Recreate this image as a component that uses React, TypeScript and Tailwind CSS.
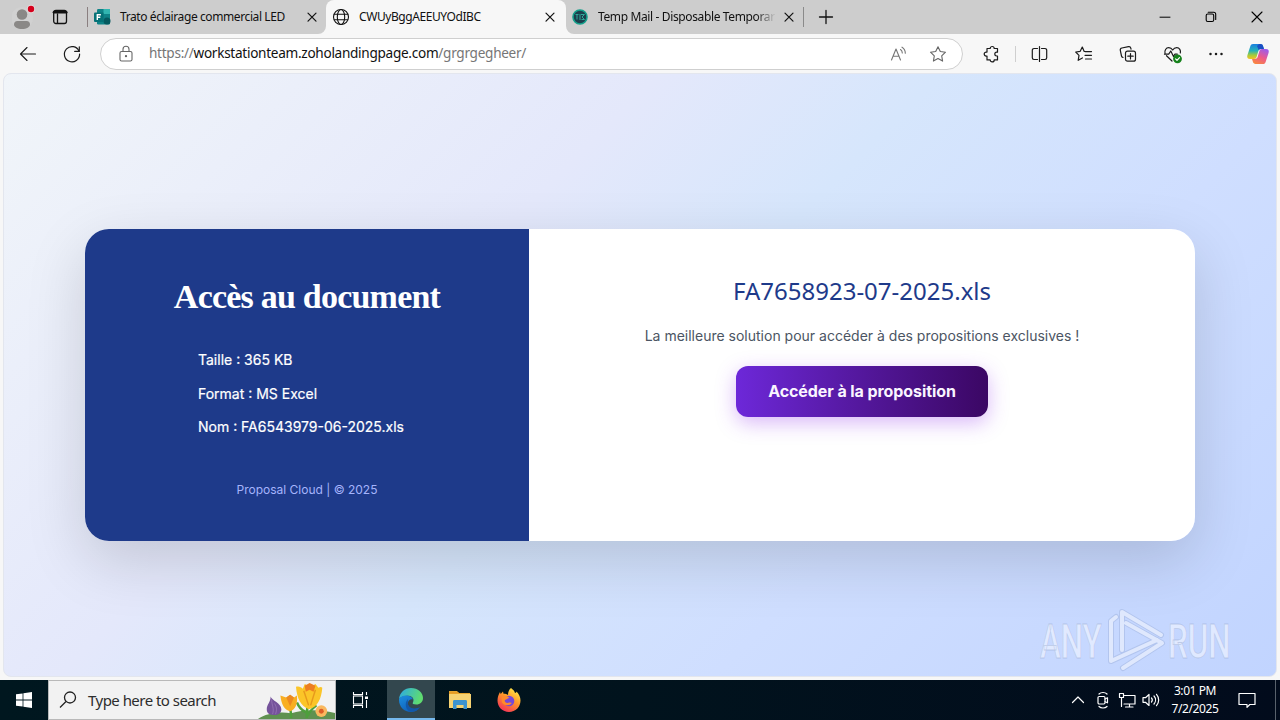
import { ReactNode } from 'react';

type IconProps = { children: ReactNode; size?: number; className?: string; w?: number };

// Thin outline icon on a 20 unit grid
function Icon({ children, size = 20, className = '', w = 1.1 }: IconProps) {
  return (
    <svg width={size} height={size} viewBox="0 0 20 20" fill="none" stroke="currentColor" strokeWidth={w} strokeLinecap="round" strokeLinejoin="round" className={`shrink-0 ${className}`}>
      {children}
    </svg>
  );
}

function CloseIcon() {
  return (
    <Icon w={1.2}>
      <path d="M6 6.200l8 8M14 6.200l-8 8" />
    </Icon>
  );
}

function TabStrip() {
  return (
    <div className="flex h-[34px] bg-[#cdcdcd] text-[#111] text-[12px]">
      <div className="flex w-[88px] items-center pl-[12px]">
        <svg width="24" height="26" viewBox="0 0 24 26" className="shrink-0">
          <circle cx="10" cy="14" r="11" fill="#dcdcdc" opacity=".3" />
          <circle cx="10" cy="10.500" r="5.300" fill="#8a8886" />
          <path d="M2 20.500c0-2.200 1.300-3.500 3.500-3.500h9c2.200 0 3.500 1.300 3.500 3.500 0 2.500-3.500 4.500-8 4.500s-8-2-8-4.500z" fill="#8a8886" />
          <circle cx="19" cy="5" r="4.200" fill="#e4dada" />
          <circle cx="19" cy="5" r="3.200" fill="#d5001c" />
        </svg>
        <Icon className="ml-[14px]" w={1.3}>
          <rect x="3.700" y="3.500" width="12.800" height="13" rx="2.200" />
          <path d="M4 5.200h12.200" strokeWidth="2.600" />
          <path d="M7.500 7v9.300" />
        </Icon>
        <div className="ml-[17px] h-[20px] w-px shrink-0 bg-[#8a7f80]" />
      </div>

      <div className="flex w-[238px] items-center pl-[5px]">
        <svg width="18" height="18" viewBox="0 0 18 18" className="shrink-0">
          <rect x="4" y="1" width="13" height="15.500" rx="1.200" fill="#0f8387" />
          <rect x="10.500" y="1" width="6.500" height="5" fill="#31b5b0" />
          <circle cx="14" cy="13" r="3.500" fill="#055a60" />
          <rect x="1" y="4.500" width="9.500" height="9.500" rx="1" fill="#067277" />
          <path d="M4.300 12V6.700h3.600M4.300 9.300h3" stroke="#fff" strokeWidth="1.400" fill="none" />
        </svg>
        <span className="ml-[9px] w-[182px] whitespace-nowrap tracking-[-0.400px]">Trato éclairage commercial LED</span>
        <CloseIcon />
      </div>

      <div className="relative flex w-[240px] items-center rounded-t-lg bg-[#f7f7f7] pl-[5px]">
        <svg width="8" height="8" viewBox="0 0 8 8" className="absolute bottom-0 -left-2" fill="#f7f7f7"><path d="M8 0v8H0a8 8 0 0 0 8-8z" /></svg>
        <svg width="8" height="8" viewBox="0 0 8 8" className="absolute bottom-0 -right-2" fill="#f7f7f7"><path d="M0 0v8h8a8 8 0 0 1-8-8z" /></svg>
        <Icon>
          <circle cx="10" cy="10" r="7.500" />
          <ellipse cx="10" cy="10" rx="3.700" ry="7.500" />
          <path d="M3.400 7.300h13.200M3.400 12.700h13.200" />
        </Icon>
        <span className="ml-[8px] w-[181px] whitespace-nowrap tracking-[-0.420px]">CWUyBggAEEUYOdIBC</span>
        <CloseIcon />
      </div>

      <div className="flex w-[239px] items-center pl-[6px]">
        <svg width="16" height="16" viewBox="0 0 16 16" className="shrink-0">
          <circle cx="8" cy="8" r="7" fill="#1c3f4d" stroke="#14a08b" strokeWidth="1.600" />
          <path d="M3.500 5.500h3M5 5.500v5M8 5v6M9 5.500h3.500l-2.500 2.500 2.500 2.500H9.500" stroke="#2fa898" strokeWidth="1" fill="none" />
        </svg>
        <span className="ml-[10px] w-[181px] shrink-0 whitespace-nowrap tracking-[-0.370px] [mask-image:linear-gradient(to_right,#000_158px,transparent_178px)]">Temp Mail - Disposable Temporar</span>
        <CloseIcon />
        <div className="ml-[4px] h-[20px] w-px shrink-0 bg-[#8a8a8a]" />
      </div>

      <div className="flex flex-1 items-center pl-[11px]">
        <Icon w={1.3}><path d="M10 3.500v13M3.500 10h13" /></Icon>
        <div className="ml-auto flex items-center gap-[26px] pr-[13px] text-black">
          <Icon w={1}><path d="M5 10.200h10" /></Icon>
          <Icon w={1.1}>
            <rect x="5.200" y="7" width="7.500" height="7.500" rx="1.500" />
            <path d="M7.200 5.200h5.500a2 2 0 0 1 2 2v5.300" />
          </Icon>
          <Icon w={1.1}><path d="M5 5l10 10M15 5L5 15" /></Icon>
        </div>
      </div>
    </div>
  );
}

function CopilotLogo() {
  return (
    <svg width="24" height="24" viewBox="0 0 24 24" className="ml-[20px] shrink-0">
      <defs>
        <linearGradient id="cpA" x1="0" y1="0" x2="0" y2="1">
          <stop offset="0" stopColor="#1a7fe0" />
          <stop offset=".45" stopColor="#25b3b8" />
          <stop offset=".75" stopColor="#a8cc3a" />
          <stop offset="1" stopColor="#f6c125" />
        </linearGradient>
        <linearGradient id="cpB" x1="0.700" y1="0" x2="0.200" y2="1">
          <stop offset="0" stopColor="#a05ce8" />
          <stop offset=".5" stopColor="#ee5a8a" />
          <stop offset="1" stopColor="#f98a3c" />
        </linearGradient>
      </defs>
      <path d="M7 2h7.500c1.400 0 2.200.9 2.600 2.200l.9 2.800h-3c-1.500 0-2.300.9-2.700 2.200L10.600 15c-.4 1.200-1.200 2-2.500 2H4c-2.300 0-3.300-1.500-2.600-3.800L4.300 4.300C4.800 2.800 5.600 2 7 2z" fill="url(#cpA)" />
      <path d="M13 2h1.500c1.400 0 2.200.9 2.600 2.200l.9 2.800h-3c-1.100 0-1.800.5-2.200 1.300L11 4z" fill="#1b4fc4" />
      <path d="M17 22H9.500c-1.400 0-2.200-.9-2.600-2.200L6 17h3c1.500 0 2.300-.9 2.700-2.200L13.400 9c.4-1.200 1.200-2 2.500-2H20c2.300 0 3.300 1.500 2.600 3.800l-2.900 8.900C19.200 21.200 18.400 22 17 22z" fill="url(#cpB)" />
    </svg>
  );
}

function Toolbar() {
  return (
    <div className="flex h-[39px] items-center bg-[#f7f7f7] text-[#1b1b1b]">
      <Icon className="ml-[18px]"><path d="M17.500 10H2.500M9 3.500L2.500 10 9 16.500" /></Icon>
      <Icon className="ml-[24px]" w={1.2}>
        <path d="M17 7.200A7.600 7.600 0 1 0 17.600 10" />
        <path d="M17.300 2.800v4.600h-4.600" />
      </Icon>

      <div className="ml-[18px] flex h-[32px] w-[863px] items-center rounded-full border border-[#cfcfcf] bg-white pl-[15px] pr-[14px]">
        <Icon className="text-[#666]">
          <rect x="4" y="7.500" width="12" height="9.500" rx="1.600" />
          <path d="M7 7.500V5.300a3 3 0 0 1 6 0v2.200" />
          <circle cx="10" cy="12.200" r=".6" fill="currentColor" />
        </Icon>
        <span className="ml-[13px] whitespace-nowrap text-[13.600px] tracking-[-0.290px] text-[#767676]">
          https://<span className="text-[#111]">workstationteam.zoholandingpage.com</span>/grgrgegheer/
        </span>
        <Icon className="ml-auto text-[#767676]">
          <path d="M2.500 16L7 5l4.500 11M4.200 12.300H10" />
          <path d="M11.500 5.500c1.200.8 1.800 2 1.800 3.500M13 3.200c2.300 1.300 3.300 3.300 3.300 6" />
        </Icon>
        <Icon className="ml-[19px] text-[#666]">
          <path d="M10 2.700l2.300 4.800 5.200.700-3.800 3.700.900 5.200-4.600-2.500-4.600 2.500.9-5.200-3.800-3.700 5.200-.7z" />
        </Icon>
      </div>

      <Icon className="ml-[19px]" w={1.2}>
        <path d="M5 4.500h3.200a2 2 0 0 1 4 0h3.300v3.700h-.8a1.900 1.900 0 0 0 0 3.800h.8v3.900h-3.300a2 2 0 0 1-4 0H5v-3.800h-.8a2 2 0 0 1 0-4H5z" />
      </Icon>
      <div className="ml-[13px] h-[16px] w-px bg-[#cfcfcf]" />
      <Icon className="ml-[14px]" w={1.2}>
        <path d="M7.500 4.500H4A1.700 1.700 0 0 0 2.300 6.200v7.600A1.700 1.700 0 0 0 4 15.500h3.500M11.500 4.500H15a1.700 1.700 0 0 1 1.700 1.700v7.600a1.700 1.700 0 0 1-1.700 1.700h-3.500M9.500 2.500v15" />
      </Icon>
      <Icon className="ml-[24px]" w={1.2}>
        <path d="M11 7.500h-.8L8.300 3 6.200 7.300l-4.500.7 3.300 3.300-.8 5 4.200-2.400M11.200 7.600h6.300M11 11.300h6.500M11.500 15h6" />
      </Icon>
      <Icon className="ml-[24px]" w={1.2}>
        <rect x="7.500" y="7.200" width="10" height="10" rx="2" />
        <path d="M12.500 9.500v5.400M9.800 12.200h5.400" />
        <path d="M5 13.500a2 2 0 0 1-1.500-1.500L2.300 6.300a2 2 0 0 1 1.600-2.300l6.600-1.300a2 2 0 0 1 2.300 1.500l.2 1" />
      </Icon>
      <Icon className="ml-[25px] overflow-visible" w={1.2}>
        <path d="M2 9.500C1.300 6.500 3 3.700 5.700 3.700c1.800 0 3 .8 4 2.300 1-1.500 2.200-2.300 4-2.300C16.500 3.700 18 6.500 17.300 9M3.500 11.700L9 17M1.500 10.200h4.200L7.800 7l2.700 5.500 1.300-2.300h2.500" />
        <circle cx="14.500" cy="14.800" r="4.400" fill="#16821c" stroke="none" />
        <path d="M12.600 14.900l1.400 1.400 2.500-2.700" stroke="#fff" />
      </Icon>
      <Icon className="ml-[23px]">
        <g fill="currentColor" stroke="none">
          <circle cx="4.500" cy="10" r="1.250" />
          <circle cx="10" cy="10" r="1.250" />
          <circle cx="15.500" cy="10" r="1.250" />
        </g>
      </Icon>
      <CopilotLogo />
    </div>
  );
}

function DocumentCard() {
  return (
    <div className="flex h-[312px] w-[1110px] overflow-hidden rounded-[24px] bg-white font-[Inter,sans-serif]">
      <div className="flex w-[444px] flex-col items-center bg-[#1e3a8a] pt-[48px] text-white">
        <h1 className="whitespace-nowrap font-['Liberation_Serif',serif] text-[34px] leading-[40px] font-bold tracking-[-0.780px]">Accès au document</h1>
        <ul className="mt-[32px] w-[218px] text-[14px] leading-[22px] [-webkit-text-stroke:0.200px_#fff]">
          <li className="mb-[12px]">Taille : 365 KB</li>
          <li className="mb-[11px]">Format : MS Excel</li>
          <li className="whitespace-nowrap">Nom : FA6543979-06-2025.xls</li>
        </ul>
        <p className="mt-[43px] text-[12px] leading-[18px] text-[#a5b4fc]">Proposal Cloud | © 2025</p>
      </div>
      <div className="flex flex-1 flex-col items-center pt-[44px]">
        <h2 className="font-['Noto_Sans',sans-serif] text-[24px] leading-[36px] text-[#1e3a8a]">FA7658923-07-2025.xls</h2>
        <p className="mt-[16px] text-[14px] leading-[22px] text-[#4b5563]">La meilleure solution pour accéder à des propositions exclusives !</p>
        <button className="mt-[19px] h-[51px] w-[252px] rounded-[12px] bg-linear-to-r from-[#6d28d9] to-[#3b0764] text-[16px] font-bold tracking-[-0.080px] text-[#faf5ff] shadow-[0_6px_20px_rgba(147,51,234,0.350)]">
          Accéder à la proposition
        </button>
      </div>
    </div>
  );
}

function Watermark() {
  return (
    <svg width="210" height="70" viewBox="0 0 210 70" className="absolute bottom-[2px] right-[36px]">
      <g fill="#eef3ff" fillOpacity=".7" stroke="#93a5cc" strokeOpacity=".45" strokeWidth=".8" fontFamily="Roboto, sans-serif" fontSize="49" fontWeight="500">
        <text transform="translate(10 54) scale(.64 1)">ANY</text>
        <text transform="translate(138 54) scale(.64 1)">RUN</text>
      </g>
      <g fill="none" strokeLinecap="round" strokeLinejoin="round">
        <path d="M86 13l-5 4v40l46-21M92 46V8l39 23M93 64l39-25-36-20" stroke="#8fa3cf" strokeOpacity=".35" strokeWidth="6" />
        <path d="M86 13l-5 4v40l46-21M92 46V8l39 23M93 64l39-25-36-20" stroke="#dfe8fd" strokeWidth="4" />
      </g>
    </svg>
  );
}

function Flowers() {
  return (
    <svg width="80" height="38" viewBox="0 0 80 39" className="ml-auto shrink-0">
      <path d="M2 39c8-6 22-8 34-6 12-3 26-5 46 0v6z" fill="#5f9150" />
      <path d="M36 38c0-8-1-12-3-17M52 38c0-9 1-15 3-19M42 22c2 5 5 8 9 10M62 25c-4 3-7 6-9 11" stroke="#4d9f3c" strokeWidth="2.500" fill="none" />
      <path d="M15 16c1 4 11 7 11 13 0 4-3 6-7 6s-8-1-8-6c0-5 4-7 4-13z" fill="#75539b" />
      <path d="M16 19c0 6 3 9 1 15M19 23c3 5 2 8 1 11" stroke="#a484bf" strokeOpacity=".6" fill="none" />
      <path d="M25 15l6 2 4-3 4 3 3-2c1 9-2 15-7 16-6-1-9-7-10-16z" fill="#f8ae22" />
      <path d="M31 17l4-3 4 3-4 9z" fill="#ec8920" />
      <path d="M41 6c3-1 5 0 7 2l2-5 6 3 5-3 3 4c2-1 3-1 4 0-1 12-5 20-14 22-8-3-12-11-13-23z" fill="#fbc528" />
      <path d="M50 5l5-3 6 3-2 6-4-2-4 2z" fill="#ed7f21" />
      <path d="M49 10l5 15M61 9l-5 16" stroke="#e79a1c" strokeWidth="1.500" fill="none" />
      <circle cx="67" cy="31" r="6" fill="#f9b85e" />
      <circle cx="67" cy="31" r="2.500" fill="#dd5e26" />
    </svg>
  );
}

function EdgeLogo() {
  return (
    <svg width="24" height="24" viewBox="0 0 24 24">
      <defs>
        <linearGradient id="edA" x1="0" y1="0" x2="1" y2="0.300">
          <stop offset="0" stopColor="#2aa9e8" />
          <stop offset="1" stopColor="#5fdc70" />
        </linearGradient>
        <linearGradient id="edB" x1="0" y1="0" x2="0.600" y2="1">
          <stop offset="0" stopColor="#1c8fe0" />
          <stop offset="1" stopColor="#0f5fb8" />
        </linearGradient>
      </defs>
      <path d="M0 11C.7 4.500 5.700 0 12 0c7 0 12 4.800 12 10 0 4-3 6.500-6.700 6.500-3.200 0-4.300-1-3.300-2.300 1-1.400 1-6-4.700-6.400C5 7.500 1.500 9 0 11z" fill="url(#edA)" />
      <path d="M0 11c1.500-2.600 5-3.900 9-3.300 2.700.4 4.500 2 5 3.800-1.700-1-4.800 0-5.200 3.500-.4 4.500 4.200 8.500 10.700 6-2 2-4.500 3-7.500 3C5 24 0 18.500 0 12z" fill="url(#edB)" />
      <path d="M8.800 14.500c0 4.500 5 8 12.500 4.500-2.500 3.500-6 5-10.300 4.500-4-1.500-6-7.500-2.200-12.500z" fill="#1257a8" />
    </svg>
  );
}

function FirefoxLogo() {
  return (
    <svg width="24" height="24" viewBox="0 0 24 24">
      <defs>
        <linearGradient id="ffA" x1="0.800" y1="0" x2="0.200" y2="1">
          <stop offset="0" stopColor="#fff04a" />
          <stop offset=".45" stopColor="#ff9528" />
          <stop offset="1" stopColor="#f42a5d" />
        </linearGradient>
      </defs>
      <path d="M14 0c2 1.500 3.500 3 4 5 1-.3 1.500-.8 1.500-1.500C22 6 23.500 9 23.500 12.500 23.500 19 18.500 24 12 24S.5 19 .5 12.500c0-3.500 1.300-6.500 2.500-8.500l.7 2L6 3.500l.5 2.300c2 0 3.500.5 4.500 1.200C11 4 12 1.500 14 0z" fill="url(#ffA)" />
      <circle cx="12" cy="13" r="5.300" fill="#7548d8" />
      <path d="M4.500 8.500c3-1.500 6-.5 8 1.500-2 .3-3 1.500-4.500 2-1 1.500 1 3.500 3.500 2.800 1.500-.5 2.500-.3 3.300.2-2 3-8 3.500-10-1z" fill="#ff8a2a" />
    </svg>
  );
}

function Taskbar() {
  return (
    <div className="flex h-[40px] bg-[linear-gradient(90deg,#00171f,#01131d_50%,#020b1c)] text-white">
      <div className="flex w-[48px] items-center justify-center">
        <svg width="16" height="16" viewBox="0 0 16 16" fill="#fff">
          <path d="M0 2.300L6.600 1.400v6.200H0zM7.400 1.300L16 0v7.600H7.400zM0 8.400h6.600v6.200L0 13.700zM7.400 8.400H16V16l-8.600-1.300z" />
        </svg>
      </div>
      <div className="flex w-[288px] items-center border border-[#b9b9b9] bg-[#f2f2f2] text-[#2d2d2d]">
        <svg width="20" height="20" viewBox="0 0 20 20" fill="none" stroke="#222" strokeWidth="1.300" className="ml-[9px]">
          <circle cx="12" cy="7.500" r="5.500" />
          <path d="M8 11.500L2 17.500" />
        </svg>
        <span className="ml-[10px] whitespace-nowrap text-[15px] tracking-[-0.530px]">Type here to search</span>
        <Flowers />
      </div>
      <div className="flex w-[51px] items-center justify-center pr-[4px]">
        <svg width="18" height="18" viewBox="0 0 18 18" fill="none" stroke="#fff" strokeWidth="1.100">
          <rect x="2.500" y="5" width="9" height="8" />
          <path d="M2.500 1v2.500h9V1M2.500 17v-2.500h9V17M15.500 1v3M15.500 9v8" />
          <path d="M14 5.500h3v2.500h-3z" fill="#fff" stroke="none" />
        </svg>
      </div>
      <div className="flex w-[48px] items-center justify-center border-b-2 border-[#76b9ed] bg-[#33474e] pt-[2px]"><EdgeLogo /></div>
      <div className="flex w-[50px] items-center justify-center">
        <svg width="22" height="20" viewBox="0 0 22 20">
          <path d="M0 1h8l2 2h11v15H0z" fill="#e7a62d" />
          <path d="M0 4h22v14H0z" fill="#f6d272" />
          <path d="M0 3.500h8l2-1.500H0z" fill="#e59a24" />
          <path d="M4 19v-7.500c0-1 .5-1.500 1.500-1.500h11c1 0 1.500.5 1.500 1.500V19h-3.500v-4h-7v4z" fill="#3d93cf" />
        </svg>
      </div>
      <div className="flex w-[48px] items-center justify-center"><FirefoxLogo /></div>

      <div className="ml-auto flex items-center">
        <Icon w={1.2}><path d="M4.500 12.500L10 7l5.500 5.500" /></Icon>
        <Icon className="ml-[5px]" w={1.2}>
          <rect x="5" y="6.500" width="7" height="7.500" rx="1.200" />
          <path d="M12 9l2.500-1.200v5L12 11.700M6 4c2-2 6-2 8 0M6 16.500c2 2 6 2 8 0" />
        </Icon>
        <Icon className="ml-[4px]" w={1.2}>
          <path d="M7.500 5.500H18v8.500H7M12.500 14v3M8.500 17h7.500M2.500 3.500h4v4h-4zM4.500 7.500v9" />
        </Icon>
        <Icon className="ml-[4px]" w={1.2}>
          <path d="M2 7.700h2.500L8 4.500v11l-3.500-3.200H2zM10.500 8c1 1.200 1 2.800 0 4M13 6c2 2.300 2 5.700 0 8M15.500 4.300c2.900 3.300 2.900 8.100 0 11.400" />
        </Icon>
        <div className="ml-[8px] w-[52px] text-center text-[12px] leading-[18px] tracking-[-0.420px] whitespace-nowrap">
          <div>3:01 PM</div>
          <div>7/2/2025</div>
        </div>
        <Icon className="ml-[16px]" w={1.2}>
          <path d="M2 3.500h16v11h-5.200L10 17.300V14.500H2z" />
        </Icon>
        <div className="ml-[18px] mr-[4px] h-[40px] w-px bg-[#59616c]" />
      </div>
    </div>
  );
}

export default function App() {
  return (
    <div className="flex h-[720px] w-[1280px] flex-col overflow-hidden bg-[#f7f7f7] font-['Noto_Sans',sans-serif]">
      <TabStrip />
      <Toolbar />
      <main className="relative mx-[3px] mb-[3px] flex flex-1 items-center justify-center overflow-hidden rounded-lg border border-[#e3e6ee] bg-[linear-gradient(135deg,#f1f5f9_0%,#e4e8fb_35%,#d6e6fc_50%,#cfdeff_70%,#c1d4ff_100%)] pt-[19px]">
        <div className="rounded-[24px] shadow-[0_20px_60px_rgba(0,0,0,0.150)]">
          <DocumentCard />
        </div>
        <Watermark />
      </main>
      <Taskbar />
    </div>
  );
}
